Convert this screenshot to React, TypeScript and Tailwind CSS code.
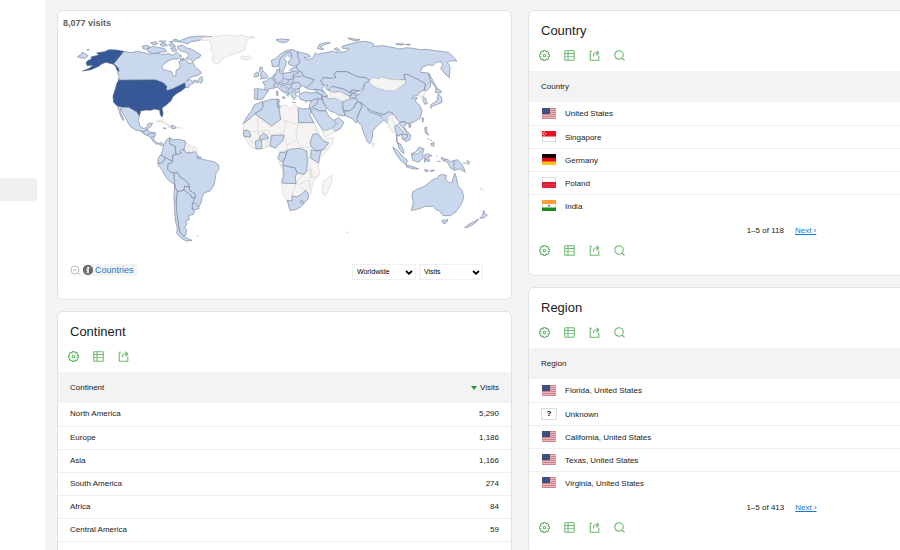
import React from "react";

type Shape = string;

const VISITED_AMERICAS: Shape[] = [
  // Canada
  "M203,127 225,131 245,127 262,131 280,135 300,133 320,136 340,134 350,139 362,130 370,137 378,141 366,150 350,150 338,155 324,164 318,173 322,182 335,185 347,188 350,198 356,203 360,195 360,184 371,178 372,168 368,158 380,150 392,153 396,162 402,164 410,160 418,174 430,184 437,192 425,199 410,203 398,208 392,216 402,211 410,217 420,213 414,222 402,227 398,236 390,236 386,222 375,228 350,240 330,246 332,232 322,222 298,213 188,214 190,205 184,190 188,184 180,170 172,165Z",
  // Arctic islands
  "M364,98 385,90 400,84 430,81 468,83 445,90 425,95 405,98 395,105 380,100Z",
  "M365,112 380,108 390,116 405,120 422,130 435,138 430,146 418,150 412,158 400,150 390,148 398,140 392,130 375,126 366,120Z",
  "M274,120 290,112 308,116 325,118 332,127 312,130 292,134 278,129Z",
  "M258,112 270,109 282,113 272,121 262,120Z",
  "M284,101 300,98 306,104 292,108Z M310,96 330,96 322,102Z M312,105 330,104 334,110 318,112Z M338,106 352,104 358,112 344,114Z M344,118 358,116 362,126 350,127Z M352,92 362,90 366,96 354,98Z M340,98 350,96 348,102Z M372,150 384,148 380,156Z",
  "M425,213 437,202 441,212 436,223 430,219 420,221Z",
  "M186,208 194,216 197,219 188,215Z M64,143 76,136 78,130 88,134 96,140 88,148 76,147Z M92,122 100,121 97,124Z",
  // Mexico
  "M184,290 200,294 218,294 232,302 240,308 250,320 247,335 252,352 262,358 272,356 275,345 290,342 285,352 275,360 270,362 265,370 255,366 240,364 222,352 214,338 208,325 200,312 198,305 193,298 194,310 202,328 202,335 194,322 190,308Z",
  "M346,350 354,350 361,356 354,359 345,357Z M322,356 330,358 324,360Z",
];

const UNITED_STATES: Shape[] = [
  "M188,214 298,213 322,222 332,232 330,246 350,240 375,228 386,222 388,236 375,246 360,255 350,264 346,274 332,287 318,297 321,314 319,324 313,318 311,303 295,300 284,304 268,303 254,306 250,320 243,308 232,302 218,294 200,294 183,290 173,280 171,262 178,240 183,222Z",
  "M203,127 180,123 160,122 145,128 122,132 129,138 105,144 107,150 95,155 90,162 94,170 112,168 100,178 80,186 105,182 128,172 138,164 150,160 162,163 172,166 180,170 187,178 189,187 183,184 180,174 172,165Z",
];

const UNVISITED_CARIBBEAN: Shape[] = [
  "M300,337 312,334 325,340 338,347 328,346 315,339Z M336,349 346,350 344,356 336,355Z M365,354 372,356 366,358Z M318,330 324,332 M380,355 382,358",
];

const VISITED_SOUTH: Shape[] = [
  // Central America
  "M255,31 265,33 270,26 276,28 283,34 298,36 298,44 292,54 298,62 308,68 316,64 323,71 316,74 306,68 300,70 292,62 284,50 272,42 262,38Z",
  "M272,42 284,36 298,36 M284,50 294,44",
  // Colombia
  "M323,71 332,56 342,50 341,68 358,76 360,98 350,104 352,122 340,116 328,110 315,102 320,86Z",
  // Venezuela
  "M342,50 350,56 370,55 388,60 388,70 384,84 372,88 374,97 364,100 360,98 358,76 341,68Z",
  // Ecuador
  "M315,102 328,110 322,122 312,128 305,122 308,108Z",
  // Peru
  "M328,110 340,116 350,122 336,130 335,146 346,154 354,158 356,190 345,184 332,172 318,146 306,132 305,126 312,128 322,122Z",
  // Brazil
  "M350,104 364,100 374,97 384,84 390,94 402,96 418,92 424,102 428,110 440,115 458,119 475,122 488,132 488,146 480,156 478,172 474,192 462,210 446,215 438,228 436,244 426,262 408,244 418,228 400,206 398,190 388,178 372,168 364,154 346,154 335,146 336,130 350,122Z",
  "M422,108 432,106 436,111 426,114Z",
  // Bolivia
  "M354,158 364,154 372,168 388,178 398,190 400,198 386,196 384,208 364,212 358,200 356,190Z",
  // Paraguay
  "M386,196 400,198 402,210 416,216 418,230 408,232 404,222 384,208Z",
  // Uruguay
  "M410,246 420,248 430,262 420,266 408,264Z",
  // Argentina
  "M364,212 384,208 404,222 408,232 418,230 410,246 408,264 416,270 412,280 398,284 400,296 388,300 394,308 386,318 392,328 388,344 378,344 370,330 366,300 360,262 362,230Z",
  // Chile
  "M356,190 358,200 364,212 360,240 362,270 366,300 370,330 380,344 390,350 408,358 390,360 374,350 362,336 364,322 358,300 356,270 354,230Z",
];

const UNVISITED_SOUTH: Shape[] = [
  "M388,64 398,70 420,80 426,90 418,94 402,96 390,94 384,84 388,74Z",
  "M398,70 396,80 402,96 M408,78 410,94",
  "M422,344 428,344 426,347Z",
];

const UNVISITED_NORTH: Shape[] = [
  "M0,90 15,84 40,84 70,78 100,81 125,79 140,83 165,84 148,89 138,94 141,104 134,112 138,120 128,128 115,130 95,138 75,145 64,152 56,166 40,160 36,150 37,142 42,132 32,124 35,114 28,96 8,93Z",
  "M121,146 126,141 138,143 150,140 156,146 146,152 132,152Z",
];

const VISITED_EURASIA: Shape[] = [
  // Russia
  "M292,128 325,136 332,142 318,147 312,144 320,153 340,146 346,131 352,137 362,133 380,131 400,126 412,132 414,126 402,120 410,116 420,124 424,131 440,126 446,120 428,118 425,112 450,105 470,100 490,97 512,100 522,106 518,112 550,110 560,112 582,116 600,120 620,116 640,118 660,122 680,121 712,126 745,130 760,144 771,156 752,156 742,160 750,172 748,206 735,195 722,178 728,168 722,158 708,160 700,169 682,168 665,176 662,190 685,192 691,210 692,232 680,245 672,244 677,225 655,212 640,205 622,196 612,197 614,212 600,212 575,212 558,208 540,204 538,210 520,206 508,214 495,205 480,205 465,200 440,188 410,188 402,195 408,205 395,208 370,206 362,215 372,232 366,238 374,252 350,244 325,240 316,236 330,226 342,212 310,202 305,190 294,184 288,174 300,160 294,145Z",
  "M685,192 694,206 706,228 712,240 702,230 690,212Z",
  "M352,119 358,106 376,101 391,101 370,109 362,114 372,122Z",
  "M228,92 244,90 268,92 262,98 248,101 234,97Z M444,86 462,90 480,92 470,96 448,91Z M588,104 612,105 610,108 590,107Z M615,106 632,106 628,109Z",
  // Scandinavia
  "M214,154 228,148 240,136 256,126 276,121 292,128 294,145 300,160 288,171 276,170 266,166 266,156 274,148 262,138 252,150 260,158 256,172 248,190 240,184 236,170 226,174 217,172Z",
  "M236,170 240,150 258,132 272,128 M272,128 276,146",
  // British Isles
  "M180,174 188,176 186,184 196,192 204,204 198,208 180,210 187,203 180,200 184,192 178,186Z",
  "M162,197 170,189 177,192 174,203 163,204Z",
  // Continental Europe
  "M163,240 176,239 194,242 196,232 188,218 200,216 206,208 216,206 222,196 230,192 230,182 238,182 240,193 252,192 276,190 268,184 274,178 288,174 294,184 305,190 310,202 342,212 334,224 318,236 308,230 298,238 298,250 286,252 290,262 282,272 274,260 262,246 248,232 242,232 252,244 266,252 264,262 256,252 244,246 232,234 220,238 206,240 204,248 196,258 188,270 176,272 163,270Z",
  "M230,246 234,247 234,260 229,258Z M246,264 256,264 252,270Z M276,280 288,281 M314,280 322,278",
  "M174,242 172,270 M194,242 205,245 M216,206 222,216 228,220 222,228 222,236 M228,194 222,206 226,216 M248,194 250,208 244,220 226,222 M250,208 262,212 280,210 280,192 M280,210 278,224 262,226 248,222 M268,212 262,222 M276,204 305,202 M278,222 298,220 302,232 M278,222 272,234 280,242 298,238 M272,234 264,244 M272,250 286,246 M254,228 266,240 M280,200 296,190 276,186 M232,226 250,226 250,234",
  // Kazakhstan and Central Asia
  "M362,215 370,206 395,208 408,205 402,195 410,188 440,188 465,200 480,205 495,205 508,214 493,225 490,238 478,246 455,242 448,250 430,240 412,236 396,232 384,244 376,236 384,230 370,228Z",
  "M384,244 396,232 412,236 430,240 448,250 456,244 478,246 462,252 456,262 440,258 420,248 398,250 390,246Z",
  "M448,250 462,252 478,256 480,264 464,268 446,264 456,258Z M456,252 470,262",
  // Turkey, Caucasus, Levant
  "M296,262 300,253 318,249 336,252 350,250 364,258 366,270 348,270 338,275 322,276 302,272Z",
  "M344,240 360,243 374,250 384,262 372,262 362,256 350,250Z",
  "M332,276 348,270 366,270 372,284 382,298 376,306 358,306 344,298 334,296 330,306 328,292Z",
  "M354,272 350,286 336,294",
  // Iran
  "M366,262 378,264 388,270 406,266 426,274 430,286 428,300 436,320 418,320 404,310 392,308 380,296 370,282Z",
  // Saudi Arabia, Oman
  "M332,304 344,298 358,306 378,306 388,324 402,334 416,326 432,340 422,358 404,368 398,356 384,364 368,364 354,342 344,326Z",
  "M402,334 410,344 398,356",
  // Afghanistan, Pakistan
  "M428,280 446,270 464,268 482,270 468,282 462,296 448,306 430,304Z",
  "M436,320 432,306 448,306 462,296 468,282 482,280 488,292 480,304 472,322 478,332 468,342 458,330Z",
  // China
  "M508,214 512,225 530,236 560,245 585,245 605,230 618,220 612,197 622,196 640,205 655,212 677,225 672,244 660,248 652,260 640,262 636,268 652,266 646,276 660,290 666,308 660,328 640,340 625,344 612,338 600,340 590,330 582,318 570,310 548,316 520,308 504,300 486,284 472,276 466,264 480,254 490,240 493,225Z",
  // India
  "M482,280 494,290 504,300 520,308 540,314 550,318 566,308 578,312 568,328 560,342 552,332 544,340 532,350 518,366 517,388 509,404 502,398 490,370 484,348 474,340 470,330 480,306 486,294Z",
  "M540,318 548,330 M504,300 508,308 540,320",
  // Korea, Japan, Taiwan
  "M670,262 678,270 682,284 674,286 668,270Z",
  "M708,238 724,246 722,252 706,250Z M714,254 724,264 726,280 712,286 698,292 692,298 692,288 704,280 712,272Z",
  "M666,326 671,328 668,340Z M625,350 632,348 630,357Z",
];

const UNVISITED_ASIA: Shape[] = [
  "M508,214 520,206 538,210 540,204 558,208 575,212 600,212 618,218 605,230 585,245 560,245 530,236 512,225Z",
  "M390,248 404,252 420,248 440,260 436,272 426,276 406,266 390,268Z",
  "M368,366 384,364 398,358 404,368 386,380 372,384Z",
  "M656,256 666,246 676,250 670,262 660,266Z",
  "M566,322 576,316 578,332 588,350 580,372 570,360 562,344Z",
  "M516,400 524,404 522,414 516,412Z",
];

const UNVISITED_AFRICA: Shape[] = [
  "M130,98 165,70 215,105 242,85 238,60 242,45 258,42 270,52 285,40 296,50 296,96 342,95 352,115 360,134 372,144 402,140 396,160 378,182 358,204 354,222 360,250 344,268 336,284 334,308 322,318 300,350 270,358 262,332 250,310 244,278 248,240 233,202 240,182 232,172 210,166 186,174 165,174 150,166 132,138Z",
  "M394,252 398,266 388,292 376,315 366,306 370,272Z",
  "M173,74 174,120 150,122 132,118 M242,85 258,90 252,126 212,132 202,116 176,124 M240,84 208,110 M258,90 296,100 288,120 290,148 260,162 252,130 M290,148 304,170 334,168 M196,148 198,170 M204,146 204,168 M174,124 184,146 M150,122 154,138 132,138 M148,140 160,160 M240,184 258,180 262,162 M288,278 310,250 318,240 336,236 334,262 M288,278 276,310 280,316 M296,280 318,270 330,268 328,300 M300,288 316,296 M248,278 290,278 M334,246 340,262 356,252 M330,190 322,212 334,236 M342,108 356,126 M360,180 390,170 M330,236 330,262",
  "M438,424 446,424 442,427Z",
];

const VISITED_AFRICA: Shape[] = [
  "M162,42 186,32 190,45 184,56 165,68 148,84 130,98 140,78 156,58Z",
  "M190,45 188,32 210,26 232,24 232,40 238,60 242,85 215,105 165,68 184,56Z",
  "M232,24 240,28 236,38 240,46 236,54 232,40Z",
  "M294,50 310,54 330,52 335,66 328,70 342,95 296,95Z",
  "M132,118 144,118 152,132 150,138 132,136 130,128Z",
  "M166,150 184,146 186,172 168,174Z",
  "M176,142 190,126 202,134 206,142 184,146Z",
  "M214,134 252,132 248,150 234,162 226,172 210,164Z",
  "M338,130 352,128 360,136 368,148 386,156 372,174 352,180 334,168 330,156Z",
  "M334,176 352,180 364,178 360,192 356,216 332,202Z",
  "M234,202 240,184 256,184 262,178 256,198 246,214Z",
  "M262,178 276,174 300,172 320,180 322,210 320,240 312,250 292,246 284,230 268,228 248,222 256,198Z",
  "M248,222 268,228 284,230 292,246 286,256 288,278 246,276 252,248Z",
  "M262,328 276,330 276,314 290,318 304,310 316,298 324,306 326,322 304,346 288,356 270,358Z",
  "M300,332 306,328 312,334 304,338Z",
];

const VISITED_OCEANIA: Shape[] = [
  // Australia
  "M188,302 204,294 224,286 240,272 252,264 262,262 266,254 278,250 290,254 286,264 298,276 306,274 314,246 320,262 324,284 338,302 341,320 334,340 318,362 302,374 280,374 266,358 258,356 250,346 226,346 206,354 184,358 190,334 186,316Z",
  "M276,388 294,386 288,396 280,398Z",
  // New Zealand
  "M402,358 404,368 412,372 404,380 390,382 398,372Z M386,384 376,396 356,408 344,410 356,400Z",
  // Indonesia and Malaysia
  "M128,168 142,178 158,196 172,208 168,222 150,206 136,186Z",
  "M168,222 186,226 206,234 190,234 170,228Z M222,236 236,238 230,244Z M240,238 254,238 244,242Z",
  "M184,188 198,182 208,168 222,174 218,188 220,200 206,214 188,208Z M186,190 204,188 216,176",
  "M224,192 232,188 246,194 234,198 240,210 232,212 228,202 224,214Z",
  "M144,156 152,160 160,176 162,188 154,182 146,170Z",
  "M258,192 262,196 M260,210 272,212 M276,198 286,206 282,212 274,204Z",
  // New Guinea
  "M282,206 292,204 300,212 322,206 334,218 342,232 346,244 330,234 312,238 300,230 294,216Z M312,208 312,236 M338,216 352,216 M350,208 360,214 352,222",
  // Indochina
  "M134,106 142,100 150,112 160,122 160,132 150,130 148,136 142,130 140,152 146,160 140,146 138,126Z",
  "M146,96 160,92 170,98 162,108 172,122 182,132 180,146 168,152 158,144 160,130 172,130 160,112 152,104Z",
  "M154,132 164,128 174,134 168,144 158,144Z",
  // Philippines
  "M224,110 230,108 230,122 236,132 226,126Z M232,142 238,146 M242,158 252,154 252,166 244,164Z M240,146 246,150 M174,98 182,100 180,108",
];

const UNVISITED_OCEANIA: Shape[] = ["M390,290 400,298 396,297Z"];

function Region({
  origin,
  kind,
  shapes,
}: {
  origin: [number, number];
  kind: "visited" | "unvisited" | "top";
  shapes: Shape[];
}) {
  const tone =
    kind === "visited"
      ? "fill-[#cad8ee] stroke-[#75829a]"
      : kind === "top"
        ? "fill-[#365896] stroke-[#4b5f85]"
        : "fill-[#f5f4f3] stroke-[#d2d2d2]";
  return (
    <g
      transform={`translate(${origin[0]} ${origin[1]}) scale(0.33333)`}
      className={tone}
      strokeWidth={1.9}
      strokeLinejoin="round"
    >
      {shapes.map((d) => (
        <path key={d} d={d} />
      ))}
    </g>
  );
}

function WorldMap() {
  return (
    <svg viewBox="58 28 453 228" className="block h-auto w-full" role="img" aria-label="Visits by country">
      <Region origin={[56, 8]} kind="unvisited" shapes={UNVISITED_CARIBBEAN} />
      <Region origin={[56, 8]} kind="visited" shapes={VISITED_AMERICAS} />
      <Region origin={[56, 8]} kind="top" shapes={UNITED_STATES} />
      <Region origin={[56, 120]} kind="unvisited" shapes={UNVISITED_SOUTH} />
      <Region origin={[56, 120]} kind="visited" shapes={VISITED_SOUTH} />
      <Region origin={[200, 8]} kind="unvisited" shapes={UNVISITED_NORTH} />
      <Region origin={[200, 8]} kind="visited" shapes={VISITED_EURASIA} />
      <Region origin={[200, 8]} kind="unvisited" shapes={UNVISITED_ASIA} />
      <Region origin={[200, 90]} kind="unvisited" shapes={UNVISITED_AFRICA} />
      <Region origin={[200, 90]} kind="visited" shapes={VISITED_AFRICA} />
      <Region origin={[350, 90]} kind="visited" shapes={VISITED_OCEANIA} />
      <Region origin={[350, 90]} kind="unvisited" shapes={UNVISITED_OCEANIA} />
    </svg>
  );
}

function GearIcon() {
  return (
    <svg viewBox="0 0 22 22" className="size-[11px]" fill="none" stroke="currentColor" strokeWidth="2.2" strokeLinejoin="round">
      <path d="M9 1h4l.8 3 2.800-1.500 2.900 2.900L18 8.200l3 .8v4l-3 .8 1.500 2.800-2.900 2.900-2.800-1.500-.8 3H9l-.8-3-2.800 1.500-2.900-2.900L4 13.800 1 13V9l3-.8-1.500-2.800 2.900-2.900L8.200 4z" />
      <circle cx="11" cy="11" r="2.600" />
    </svg>
  );
}

function TableIcon() {
  return (
    <svg viewBox="0 0 22 22" className="size-[11px]" fill="none" stroke="currentColor" strokeWidth="2.2">
      <rect x="1.500" y="1.500" width="19" height="19" rx="1.500" />
      <path d="M1.500 7h19M8 1.500v19" />
      <path d="M1.500 13h19" strokeOpacity=".65" />
    </svg>
  );
}

function ExportIcon() {
  return (
    <svg viewBox="0 0 22 22" className="size-[11px]" fill="none" stroke="currentColor" strokeWidth="2.2">
      <path d="M6 2.500H2.500v18h17V11M9 13v-3c0-2.500 1-4 3.500-4H19M15 1.500 19.500 6 15 10.500" />
    </svg>
  );
}

function SearchIcon() {
  return (
    <svg viewBox="0 0 22 22" className="size-[11px]" fill="none" stroke="currentColor" strokeWidth="2.2">
      <circle cx="10" cy="10" r="8.500" />
      <path d="m16 16 5 5" />
    </svg>
  );
}

function Toolbar({ search = true }: { search?: boolean }) {
  return (
    <div className="flex h-[11px] gap-[14px] px-[10px] text-[#6fb972]">
      <button type="button" aria-label="Configure" className="size-[11px]">
        <GearIcon />
      </button>
      <button type="button" aria-label="Change view" className="size-[11px]">
        <TableIcon />
      </button>
      <button type="button" aria-label="Export" className="size-[11px]">
        <ExportIcon />
      </button>
      {search && (
        <button type="button" aria-label="Search" className="size-[11px]">
          <SearchIcon />
        </button>
      )}
    </div>
  );
}

type FlagName = "us" | "sg" | "de" | "pl" | "in" | "unknown";

function Flag({ name }: { name: FlagName }) {
  if (name === "unknown") {
    return (
      <span className="flex h-3 w-4 items-center justify-center border border-[#ddd] bg-white text-[8px] leading-none font-bold text-black">
        ?
      </span>
    );
  }
  return (
    <svg viewBox="0 0 14 11" className="mx-px h-[11px] w-[14px]" aria-hidden="true">
      {name === "us" && (
        <>
          <rect width="14" height="11" fill="#e9b5ba" />
          <path d="M0 .5h14M0 2.500h14M0 4.500h14M0 6.500h14M0 8.500h14M0 10.500h14" stroke="#d2848c" />
          <rect width="8" height="6" fill="#3c4f7c" />
          <path d="M1 1.500h6M1 3.500h6" stroke="#56678f" strokeDasharray="1 1" strokeWidth=".5" />
        </>
      )}
      {name === "sg" && (
        <>
          <rect x=".5" y=".5" width="13" height="10" fill="#fff" stroke="#ddd" />
          <rect width="14" height="5.500" fill="#e8111f" />
          <path d="M3 1.200a1.600 1.600 0 1 0 0 3" stroke="#fff" strokeWidth=".8" fill="none" />
          <circle cx="3.800" cy="2.600" r=".6" fill="#fff" />
        </>
      )}
      {name === "de" && (
        <>
          <rect width="14" height="11" fill="#ffc61a" />
          <rect width="14" height="7.500" fill="#e30b17" />
          <rect width="14" height="4" fill="#140000" />
        </>
      )}
      {name === "pl" && (
        <>
          <rect x=".5" y=".5" width="13" height="10" fill="#fff" stroke="#ddd" />
          <rect y="5" width="14" height="6" fill="#e01c34" />
          <path d="M0 7.500h14M1 9.500h13" stroke="#ec5f70" strokeDasharray="1 1" strokeWidth=".6" />
        </>
      )}
      {name === "in" && (
        <>
          <rect x=".5" y=".5" width="13" height="10" fill="#fff" stroke="#ddd" />
          <rect width="14" height="4" fill="#ff9c33" />
          <rect y="7.500" width="14" height="3.500" fill="#1a8a1a" />
          <circle cx="7" cy="5.700" r="1.300" fill="#8c93c4" />
        </>
      )}
    </svg>
  );
}

const CARD = "overflow-hidden rounded-[6px] border border-[#e2e2e2] bg-white";
const TITLE = "px-3 pt-3 text-[13px] leading-4 text-[#212121]";

interface FlagRow {
  flag: FlagName;
  label: string;
}

function FlagCard({ title, rows, range }: { title: string; rows: FlagRow[]; range: string }) {
  return (
    <section className={CARD}>
      <h2 className={TITLE}>{title}</h2>
      <div className="pt-[11px] pb-[10px]">
        <Toolbar />
      </div>
      <table className="w-full border-collapse text-left">
        <thead>
          <tr className="h-[31px] bg-[#f3f3f3]">
            <th scope="col" className="px-3 font-normal">{title}</th>
          </tr>
        </thead>
        <tbody>
          {rows.map((row) => (
            <tr key={row.label} className="h-[23px] border-b border-[#eeeeee] last:border-b-0">
              <td className="px-3">
                <span className="flex items-center gap-2">
                  <Flag name={row.flag} />
                  <span className="pt-0.5">{row.label}</span>
                </span>
              </td>
            </tr>
          ))}
        </tbody>
      </table>
      <div className="flex justify-center gap-[11px] pt-2 pb-2 pl-[52px] leading-3">
        <span>{range}</span>
        <a href="#next" className="text-[#1976d2] underline">Next ›</a>
      </div>
      <div className="pb-[19px]">
        <Toolbar />
      </div>
    </section>
  );
}

const COUNTRIES: FlagRow[] = [
  { flag: "us", label: "United States" },
  { flag: "sg", label: "Singapore" },
  { flag: "de", label: "Germany" },
  { flag: "pl", label: "Poland" },
  { flag: "in", label: "India" },
];

const REGIONS: FlagRow[] = [
  { flag: "us", label: "Florida, United States" },
  { flag: "unknown", label: "Unknown" },
  { flag: "us", label: "California, United States" },
  { flag: "us", label: "Texas, United States" },
  { flag: "us", label: "Virginia, United States" },
];

const CONTINENTS: [string, string][] = [
  ["North America", "5,290"],
  ["Europe", "1,186"],
  ["Asia", "1,166"],
  ["South America", "274"],
  ["Africa", "84"],
  ["Central America", "59"],
];

function MapSelect({ label, options }: { label: string; options: string[] }) {
  return (
    <div className="grid w-16 items-center border border-[#f0f0f0] bg-white">
      <select
        aria-label={label}
        className="col-start-1 row-start-1 h-[14px] w-full appearance-none bg-transparent px-1 text-[7px] leading-[14px] text-black"
      >
        {options.map((option) => (
          <option key={option}>{option}</option>
        ))}
      </select>
      <svg viewBox="0 0 8 5" className="pointer-events-none col-start-1 row-start-1 mr-0.5 h-[5px] w-2 justify-self-end" fill="none" stroke="#000" strokeWidth="1.800">
        <path d="m1 1 3 2.700L7 1" />
      </svg>
    </div>
  );
}

function MapCard() {
  return (
    <section className={CARD}>
      <h2 className="px-[5px] pt-[6px] text-[9px] leading-3 font-bold text-[#616161]">8,077 visits</h2>
      <WorldMap />
      <div className="flex items-start justify-between pt-[7px] pr-7 pb-[19px] pl-3">
        <div className="flex items-center gap-0.5">
          <button type="button" aria-label="Zoom out" className="size-[11px] text-[#bbb]">
            <svg viewBox="0 0 22 22" className="size-[11px]" fill="none" stroke="currentColor" strokeWidth="2">
              <circle cx="10" cy="10" r="8" />
              <path d="M6 10h8M16 16l5 5" />
            </svg>
          </button>
          <a href="#countries" className="flex h-3 items-center gap-0.5 bg-[#f3f3f3] pr-[3px] text-[9px] leading-3 text-[#1976d2]">
            <svg viewBox="0 0 20 20" className="size-[10px]" aria-hidden="true">
              <circle cx="10" cy="10" r="8.500" fill="#ddd" stroke="#555" strokeWidth="3" />
              <path d="M5 3 2 8l2 5 3 4 1-5-2-3 3-4zM13 4l4 3 1 5-3 4-3 1V9z" fill="#666" />
            </svg>
            Countries
          </a>
        </div>
        <div className="flex gap-[3px]">
          <MapSelect label="Area" options={["Worldwide", "Europe", "Asia"]} />
          <MapSelect label="Metric" options={["Visits", "Actions"]} />
        </div>
      </div>
    </section>
  );
}

function ContinentCard() {
  return (
    <section className={CARD}>
      <h2 className={TITLE}>Continent</h2>
      <div className="pt-[11px] pb-[10px]">
        <Toolbar search={false} />
      </div>
      <table className="w-full border-collapse">
        <thead>
          <tr className="h-[31px] bg-[#f3f3f3]">
            <th scope="col" className="px-3 text-left font-normal">Continent</th>
            <th scope="col" className="px-3 font-normal">
              <span className="flex items-center justify-end gap-[3px]">
                <svg viewBox="0 0 6 4" className="h-1 w-1.5" aria-hidden="true">
                  <path d="M0 0h6L3 4z" fill="#229a35" />
                </svg>
                Visits
              </span>
            </th>
          </tr>
        </thead>
        <tbody>
          {CONTINENTS.map(([name, visits]) => (
            <tr key={name} className="h-[23px] border-b border-[#eeeeee]">
              <td className="px-3">{name}</td>
              <td className="px-3 text-right">{visits}</td>
            </tr>
          ))}
        </tbody>
      </table>
      <div className="py-[19px]">
        <Toolbar search={false} />
      </div>
    </section>
  );
}

export default function App() {
  return (
    <div className="flex h-screen overflow-hidden bg-[#f4f4f4] font-['Liberation_Sans',Arial,sans-serif] text-[8px] leading-3 text-[#212121]">
      <nav aria-label="Main" className="w-[45px] shrink-0 bg-white pt-[178px] pr-2">
        <a href="#locations" aria-label="Locations" aria-current="page" className="block h-[23px] rounded-r-[4px] bg-[#efeff0]" />
      </nav>
      <main className="grid min-w-[950px] flex-1 grid-cols-2 items-start gap-4 px-3 pt-[10px]">
        <div className="flex flex-col gap-[11px]">
          <MapCard />
          <ContinentCard />
        </div>
        <div className="flex flex-col gap-[11px]">
          <FlagCard title="Country" rows={COUNTRIES} range="1–5 of 118" />
          <FlagCard title="Region" rows={REGIONS} range="1–5 of 413" />
        </div>
      </main>
    </div>
  );
}
